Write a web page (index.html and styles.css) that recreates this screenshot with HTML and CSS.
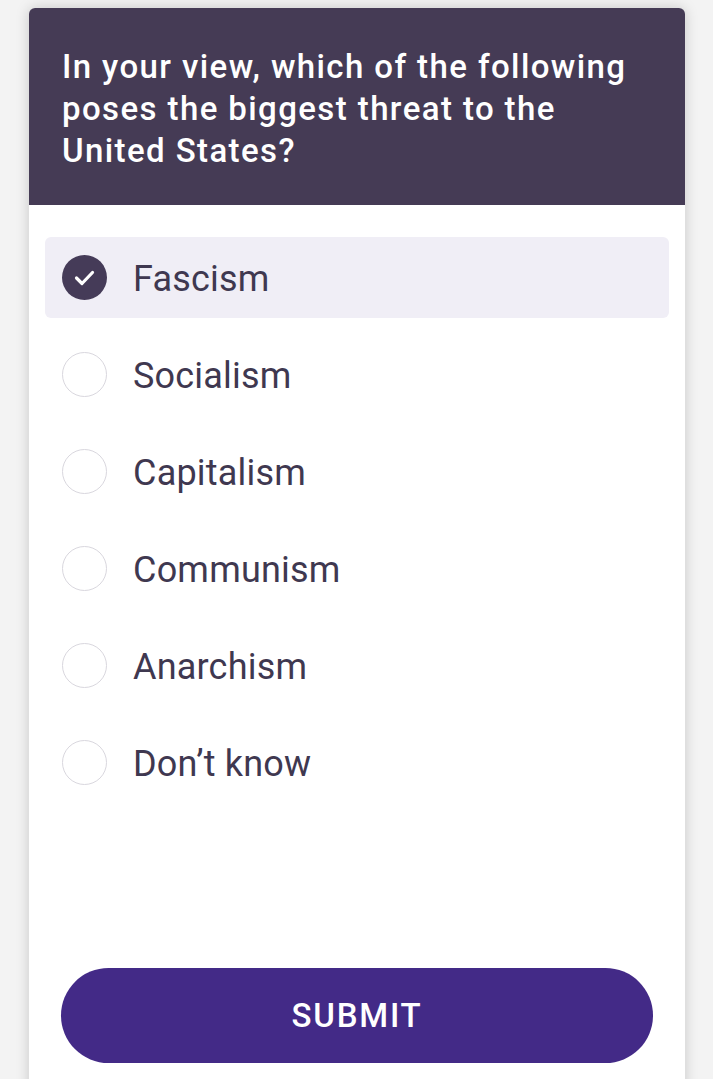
FILE: index.html
```html
<!DOCTYPE html>
<html lang="en">
<head>
<meta charset="utf-8">
<title>Poll</title>
<link rel="stylesheet" href="styles.css">
</head>
<body>
<div class="card">
  <div class="header">
    <h1 class="question">In your view, which of the following poses the biggest threat to the United States?</h1>
  </div>
  <div class="options">
    <div class="option selected">
      <span class="radio checked">
        <svg width="45" height="45" viewBox="0 0 45 45"><circle cx="22.5" cy="22.5" r="22.5" fill="#453b58"/><path d="M14.5 23 L20 28.5 L30.5 17.5" fill="none" stroke="#fff" stroke-width="3.2" stroke-linecap="round" stroke-linejoin="round"/></svg>
      </span>
      <span class="label">Fascism</span>
    </div>
    <div class="option"><span class="radio"></span><span class="label">Socialism</span></div>
    <div class="option"><span class="radio"></span><span class="label">Capitalism</span></div>
    <div class="option"><span class="radio"></span><span class="label">Communism</span></div>
    <div class="option"><span class="radio"></span><span class="label">Anarchism</span></div>
    <div class="option"><span class="radio"></span><span class="label">Don’t know</span></div>
  </div>
  <div class="actions">
    <button class="submit">SUBMIT</button>
  </div>
</div>
</body>
</html>
```
FILE: styles.css
```css
html, body {
  margin: 0;
  padding: 0;
}
body {
  background: #f3f3f3;
  font-family: Roboto, "Liberation Sans", sans-serif;
  padding: 8px 28px 0 29px;
  height: 1079px;
  box-sizing: border-box;
  overflow: hidden;
}
.card {
  background: #ffffff;
  border-radius: 6px 6px 0 0;
  box-shadow: 0 0 14px rgba(0, 0, 0, 0.18);
  min-height: 1200px;
}
.header {
  background: #453b55;
  border-radius: 6px 6px 0 0;
  padding: 38px 33px 33px 33px;
}
.question {
  margin: 0;
  color: #ffffff;
  font-size: 33px;
  font-weight: 500;
  line-height: 42px;
  letter-spacing: 1.4px;
}
.options {
  padding: 32px 16px 0 16px;
  display: flex;
  flex-direction: column;
  gap: 16px;
}
.option {
  height: 81px;
  border-radius: 6px;
  display: flex;
  align-items: center;
  padding-left: 17px;
  gap: 26px;
}
.option.selected {
  background: #f0eef6;
}
.radio {
  width: 45px;
  height: 45px;
  box-sizing: border-box;
  border-radius: 50%;
  border: 1.5px solid #d9d7de;
  background: #fff;
  flex: none;
}
.radio.checked {
  border: none;
  background: transparent;
}
.radio svg {
  display: block;
}
.label {
  color: #3f3850;
  font-size: 36px;
  font-weight: 400;
  letter-spacing: 0.2px;
  padding-top: 2px;
}
.actions {
  padding: 165px 32px 0 32px;
}
.submit {
  display: block;
  width: 100%;
  height: 95px;
  border: none;
  border-radius: 48px;
  background: #432a87;
  color: #ffffff;
  font-family: Roboto, "Liberation Sans", sans-serif;
  font-size: 33px;
  font-weight: 500;
  letter-spacing: 1.8px;
  padding: 0;
}
```
